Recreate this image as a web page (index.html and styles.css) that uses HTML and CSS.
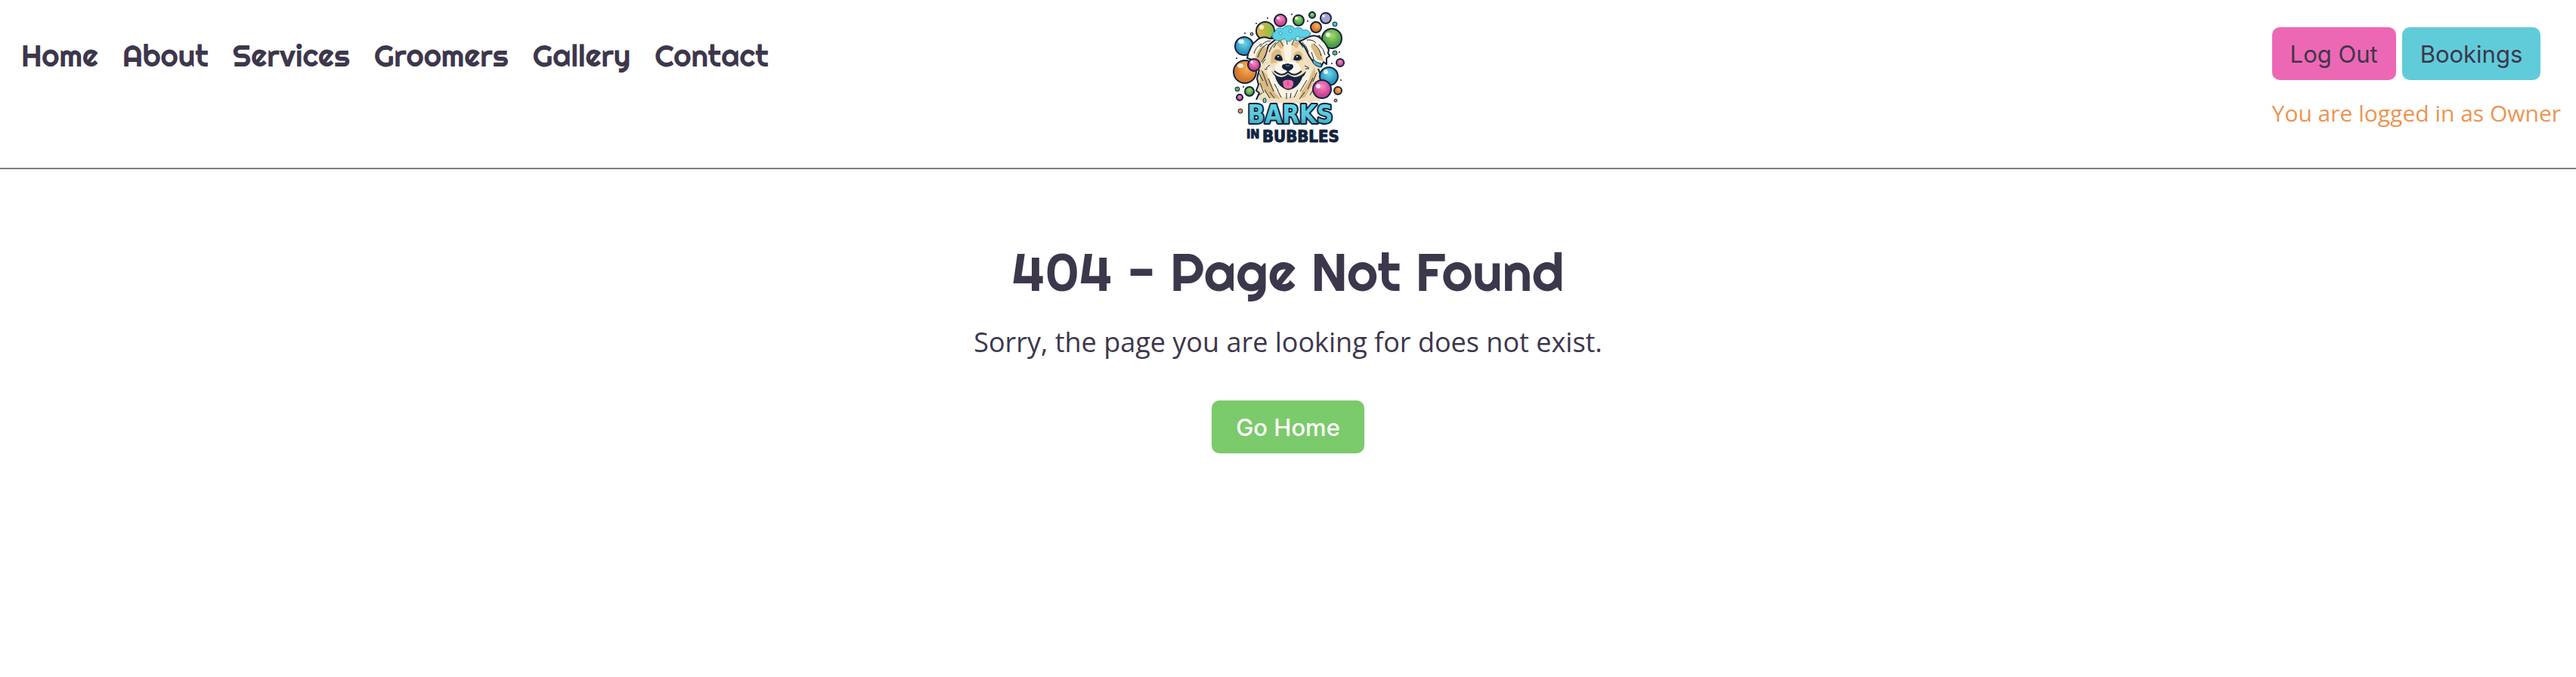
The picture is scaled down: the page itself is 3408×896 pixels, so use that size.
FILE: index.html
```html
<!DOCTYPE html>
<html lang="en">
<head>
<meta charset="utf-8">
<title>Barks in Bubbles</title>
<link rel="stylesheet" href="styles.css">
</head>
<body>
<header class="header">
<nav class="nav" aria-label="Main">
<a href="#">Home</a><a href="#">About</a><a href="#">Services</a><a href="#">Groomers</a><a href="#">Gallery</a><a href="#">Contact</a>
</nav>
<a class="logo" href="#" aria-label="Barks in Bubbles">
<svg viewBox="-6 0 200 200" width="200" height="200">
<defs>
<radialGradient id="o" cx=".6" cy=".35"><stop offset="0" stop-color="#fbb35a"/><stop offset="1" stop-color="#d4782c"/></radialGradient>
<radialGradient id="b" cx=".5" cy=".35"><stop offset="0" stop-color="#6fd8ea"/><stop offset="1" stop-color="#2b93bf"/></radialGradient>
<radialGradient id="g" cx=".5" cy=".35"><stop offset="0" stop-color="#a4dc68"/><stop offset="1" stop-color="#4b9c45"/></radialGradient>
<radialGradient id="p" cx=".5" cy=".35"><stop offset="0" stop-color="#f98bc8"/><stop offset="1" stop-color="#c9428f"/></radialGradient>
<linearGradient id="y"><stop offset="0" stop-color="#f0b445"/><stop offset="1" stop-color="#7fbd4d"/></linearGradient>
<linearGradient id="t" x2="0" y2="1"><stop offset="0" stop-color="#62d8e6"/><stop offset=".6" stop-color="#58c7d9"/><stop offset="1" stop-color="#2a91a8"/></linearGradient>
</defs>
<g stroke="#13233f" stroke-width="2">
<circle cx="64" cy="41" r="12" fill="url(#y)"/>
<circle cx="84" cy="27" r="8" fill="url(#p)"/>
<circle cx="108" cy="27" r="7" fill="url(#g)"/>
<circle cx="126" cy="20" r="4" fill="url(#g)"/>
<circle cx="144" cy="24" r="7" fill="#aaa3cc"/>
<circle cx="131" cy="36" r="7" fill="url(#o)"/>
<circle cx="152" cy="51" r="13" fill="url(#g)"/>
<circle cx="36" cy="61" r="12" fill="url(#b)"/>
<circle cx="163" cy="83" r="5" fill="url(#p)"/>
</g>
<g stroke="#13233f" stroke-width="1">
<circle cx="156" cy="32" r="3" fill="#4dbccc"/><circle cx="156" cy="70" r="3" fill="#5fae7c"/>
<circle cx="46" cy="45" r="2" fill="#b0a05e"/><circle cx="135" cy="49" r="2" fill="#77737c"/>
</g>
<path d="M53 131l4-8-4-2 2-9-2-8 1-10 4-10 3-20 8-13 12-3 13-1 14 1 12 5 9 12 3 17 5 10 2 12-3 8 3 8-5 5 3 10-8-2-6 4-5-3-7 4-8-2-9 3-8-3-8 2-7-4-5 3-6-3z" fill="#f1dfbd"/>
<path d="M56 92l-3 12 2 8-3 8 4 3-4 9M134 91l5 13-2 6" fill="none" stroke="#13233f" stroke-width="2"/>
<path d="M70 51c-9-4-16 0-19 4-5 3-6 8-8 12l-2 5-1 5 6 2 4 4 9-2 5-8 4-13 11-9zM119 50c8-5 16-3 21 4 4 3 6 8 8 12l-1 4 2 4-4 3v8l-4-3-3 6-10-5-6-9-6-12-7-7z" fill="#fbf3e4" stroke="#13233f" stroke-width="2" stroke-linejoin="round"/>
<path d="M61 60q-10 7-11 22l7 2q8-11 9-20zM126 57q13 10 15 24l-8-2q-6-12-9-18zM72 73q3-10 12-7l2 9-8 8-7 1zM101 72q7-8 12-1l1 8-8 4zM58 91l7 7 5 11 6 13 8 9-15-2-8-12-5-6zM129 89l2 11-6 14-9 15-6 1 3-13 8-9 4-10zM79 59l6-6 3 9-3 3zM100 60l5-7 5 5-5 6z" fill="#dcba80"/>
<path d="M88 58l5-5 6 6-1 17-3 7-5-5-1-9zM64 85l9 6 5 13 7 11 9 7 8-5 9-8 7-16 7-5-4 18-7 12-11 9-16 2-9-8-8-15z" fill="#fcf4e3"/>
<path d="M78 56q-7 6-9 13M83 54q-5 3-8 9M113 56q6 5 8 13M108 54l6 9M88 61l-5-8M93 59l-1-8M99 60l3-7M67 58q-9 4-13 18M59 58q-8 4-10 13M128 58q8 6 10 16M135 59q7 6 8 14M71 54q-8 0-14 8M119 53q8-1 12 4M63 77l3-9M60 84l4-6M128 78l-3-9M55 96l6 11M60 94l7 20M68 104l7 17M57 110l5 13M63 119l7 11M70 122l6 8M76 111l5 9M80 119l5 10M132 96l-5 12M127 103l-7 15M119 106l-9 15M131 112l-8 14M116 122l-7 9M107 119l-5 10M92 123v8M98 123l-1 7M54 127l6-4M70 86l-5 4M67 91l-4 1M116 87l6 3M117 91l5 0" fill="none" stroke="#1c2b47" stroke-width="1"/>
<path d="M76 52c-5-4-3-9 1-10 1-5 6-6 10-4 4-6 13-5 16 0 5-3 9-1 11 2 5-1 9 1 10 5-4 5-7 4-13 5-4 5-7 4-11 1-4 6-8 4-11 0-4 3-8 4-13 1z" fill="#5cd0e4" stroke="#298eac"/>
<g fill="#a5ebf3" stroke="#329cba"><circle cx="84" cy="44" r="2"/><circle cx="97" cy="41" r="2"/><circle cx="107" cy="51" r="3"/></g>
<path d="M72 93q2 5 5 8c2 9 8 16 17 18 10-1 16-8 19-17q4-3 5-8-8 8-15 8-6-1-9-4-4 4-9 4-7 0-13-9z" fill="#182542"/>
<path d="M87 107q7-4 14 0c2 7-2 11-7 11s-8-4-7-11z" fill="#ef69ab" stroke="#13233f"/><path d="M94 107v6" stroke="#b83e7e"/>
<path d="M76 90q5-11 17-8 13-3 18 8c-2 10-12 9-18 4-7 6-15 5-17-4z" fill="#fff8ed"/>
<path d="M76 94q10 9 18 1 8 8 18-1M94 91v5" fill="none" stroke="#13233f" stroke-width="2"/>
<path d="M87 86q6-3 13 0 2 4-2 6l-4 2-4-2q-5-2-3-6z" fill="#13233f" stroke="#13233f"/><path d="M91 87h5" stroke="#8293a6"/>
<path d="M76 78q1-6 6-6 5 2 5 8-6 2-11-2zM101 79q1-7 6-7 5 1 5 6-5 4-11 1z" fill="#13233f"/>
<g fill="#fff"><circle cx="81" cy="75" r="1"/><circle cx="106" cy="75" r="1"/></g>
<path d="M127 78q5 6 11 6v5q-8-1-11-6z" fill="#44b7cf" stroke="#13233f"/>
<g stroke="#13233f" stroke-width="2">
<circle cx="37" cy="95" r="15" fill="url(#o)"/><circle cx="49" cy="86" r="8" fill="url(#p)"/>
<circle cx="148" cy="101" r="12" fill="url(#b)"/><circle cx="139" cy="118" r="12" fill="url(#p)"/>
<circle cx="160" cy="120" r="5" fill="url(#o)"/><circle cx="43" cy="121" r="6" fill="url(#g)"/>
<circle cx="30" cy="129" r="4" fill="url(#p)"/>
</g>
<g stroke="#13233f"><circle cx="27" cy="118" r="3" fill="#64a84d"/><circle cx="31" cy="147" r="3" fill="#d8924e"/><circle cx="157" cy="133" r="2" fill="#d8924e"/></g>
<g fill="#fff" opacity=".8"><ellipse cx="32" cy="55" rx="4" ry="3"/><ellipse cx="31" cy="87" rx="4" ry="3"/><circle cx="59" cy="36" r="3"/><circle cx="147" cy="46" r="3"/><circle cx="144" cy="95" r="3"/><circle cx="134" cy="114" r="3"/><circle cx="81" cy="24" r="2"/><circle cx="105" cy="24" r="2"/><circle cx="141" cy="21" r="2"/><circle cx="46" cy="82" r="2"/></g>
<g fill="#13233f"><circle cx="67" cy="24" r="1"/><circle cx="52" cy="31" r="1"/><circle cx="37" cy="44" r="1"/><circle cx="99" cy="19" r="1"/><circle cx="120" cy="28" r="1"/><circle cx="26" cy="77" r="1"/><circle cx="152" cy="84" r="1"/><circle cx="164" cy="106" r="1"/><circle cx="35" cy="115" r="1"/><circle cx="162" cy="69" r="1"/></g>
<text class="logo-barks" x="97" y="163" text-anchor="middle">BARKS</text>
<ellipse cx="63" cy="133" rx="2" ry="3" fill="#62d8e6" stroke="#13233f"/>
<text class="logo-in" x="39" y="183">IN</text>
<text class="logo-bubbles" x="60" y="188">BUBBLES</text>
</svg>
</a>
<div class="account">
<div class="actions"><button class="btn pink">Log Out</button><button class="btn teal">Bookings</button></div>
<p class="status">You are logged in as Owner</p>
</div>
</header>
<main class="main">
<h1>404 - Page Not Found</h1>
<p class="message">Sorry, the page you are looking for does not exist.</p>
<a class="btn green" href="#">Go Home</a>
</main>
</body>
</html>
```
FILE: styles.css
```css
* { box-sizing: border-box; }
body { margin: 0; background: #fff; color: #3d374c; font-family: "Open Sans", sans-serif; }
.header { display: grid; grid-template-columns: 1fr auto 1fr; align-items: start; min-height: 224px; border-bottom: 2px solid #808080; }
.nav { display: flex; gap: 32px; padding: 48px 0 0 28px; font: 400 40px/52px Righteous, Lato, sans-serif; }
.nav a { color: inherit; text-decoration: none; }
.logo, .logo svg { display: block; }
.logo text { font-family: "DejaVu Sans Condensed", "DejaVu Sans", sans-serif; font-weight: 700; fill: #13233f; }
.logo .logo-barks { font-size: 33px; fill: url(#t); stroke: #13233f; stroke-width: 4px; paint-order: stroke; stroke-linejoin: round; }
.logo .logo-in { font-size: 16px; stroke: #13233f; stroke-width: 1px; }
.logo .logo-bubbles { font-size: 22px; stroke: #13233f; stroke-width: 1px; stroke-linejoin: round; }
.account { justify-self: end; padding: 36px 20px 0 0; }
.actions { display: flex; gap: 8px; }
.btn { display: inline-block; border: 0; border-radius: 10px; padding: 16px 24px 14px; color: #3d374c; font: 400 31px/40px Inter, sans-serif; text-decoration: none; }
.pink { background: #ed68b4; }
.teal { background: #61ccd9; }
.green { background: #7bca6b; color: #fff; padding: 16px 32px 14px; font-weight: 500; }
.status { margin: 22px 0 0; color: #ec9450; font-size: 30px; line-height: 44px; }
.main { display: flex; flex-direction: column; align-items: center; padding: 92px 24px; }
h1 { margin: 0; font: 400 70px/88px Righteous, Lato, sans-serif; }
.message { margin: 20px 0 48px; font-size: 36px; line-height: 58px; }
```
